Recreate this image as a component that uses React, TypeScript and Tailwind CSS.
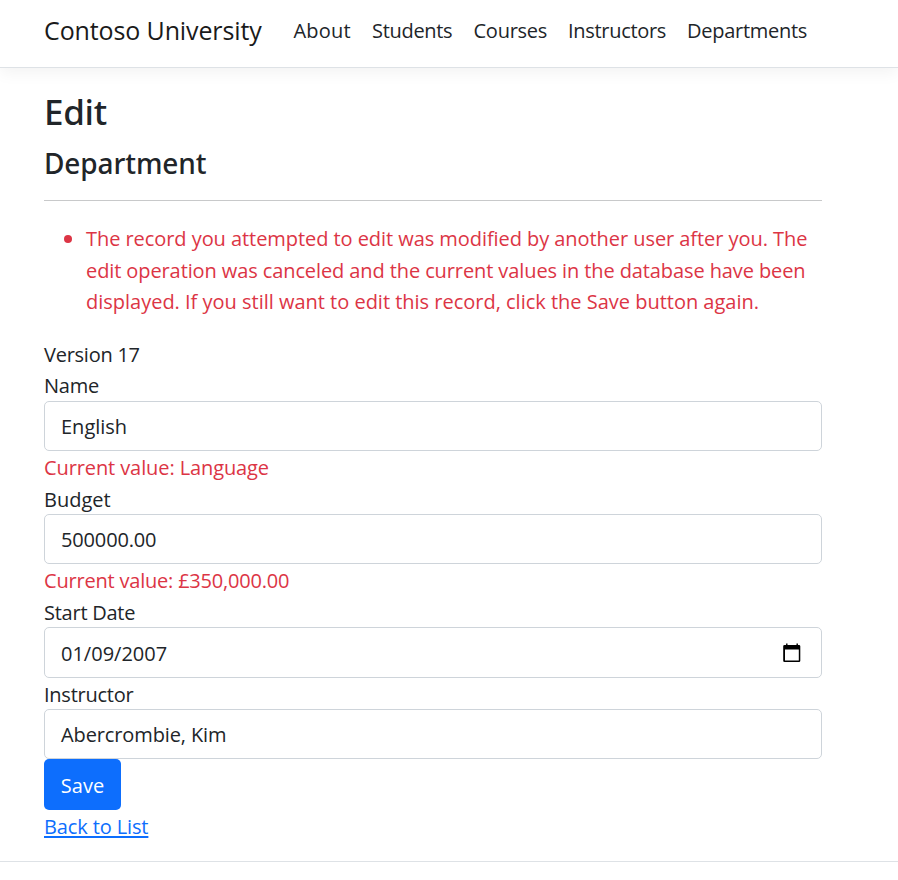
import type { ReactNode } from "react";

const navItems = [
  { label: "About", style: "w-[78.5px] tracking-[0.2px]" },
  { label: "Students", style: "w-[101.5px] tracking-[-0.3px]" },
  { label: "Courses", style: "w-[94.5px] tracking-[-0.25px]" },
  { label: "Instructors", style: "w-[119px] tracking-[-0.3px]" },
  { label: "Departments", style: "tracking-[-0.27px]" },
];

function CalendarIcon() {
  return (
    <svg className="mb-[2px] h-[20px] w-[18px]" viewBox="0 0 18 20" fill="none">
      <path d="M3.8 0.5v3M14.2 0.5v3" stroke="#000" strokeWidth="1.4" />
      <path
        fillRule="evenodd"
        fill="#000"
        d="M1.5 2h14.5a1.3 1.3 0 0 1 1.3 1.3v14.4a1.3 1.3 0 0 1-1.3 1.3H1.5a1.3 1.3 0 0 1-1.3-1.3V3.3A1.3 1.3 0 0 1 1.5 2zM2 6.5v11h13.8v-11z"
      />
    </svg>
  );
}

function Label({ children, className = "" }: { children: ReactNode; className?: string }) {
  return <div className={`whitespace-nowrap ${className}`}>{children}</div>;
}

function Field({ children, className = "" }: { children: ReactNode; className?: string }) {
  return (
    <div
      className={`flex items-center justify-between rounded-[5px] border border-[#ced4da] bg-white pl-4 pr-5 pt-[2px] ${className}`}
    >
      {children}
    </div>
  );
}

export default function App() {
  return (
    <div className="min-h-[880px] bg-white font-['Open_Sans','Noto_Sans',sans-serif] text-[20px] leading-[31.5px] text-[#212529]">
      <header className="h-[68px] border-b border-[#dee2e6] bg-white pl-11 shadow-[0_5px_15px_rgba(0,0,0,0.05)]">
        <nav className="flex pt-[15px]">
          <a className="w-[249.5px] whitespace-nowrap text-[25px] tracking-[-0.12px] text-[#1a1a1a]">Contoso University</a>
          {navItems.map((item) => (
            <a key={item.label} className={`whitespace-nowrap ${item.style}`}>
              {item.label}
            </a>
          ))}
        </nav>
      </header>

      <main className="ml-11 w-[778px]">
        <h1 className="pt-[20px] font-['Noto_Sans'] text-[35px] font-medium leading-[48px] tracking-[-0.3px]">Edit</h1>
        <h2 className="pt-[9px] font-['Noto_Sans'] text-[28px] font-medium leading-[36px] tracking-[-0.1px]">Department</h2>
        <hr className="mt-[19px] border-0 border-t border-[#c8c9ca]" />

        <ul className="mt-[22px] flex text-[#dc3545]">
          <li className="flex">
            <span className="ml-5 mr-[14px] mt-[12px] h-2 w-2 shrink-0 rounded-full bg-[#dc3545]" />
            <div className="whitespace-nowrap">
              <div className="tracking-[-0.06px]">The record you attempted to edit was modified by another user after you. The</div>
              <div className="tracking-[-0.1px]">edit operation was canceled and the current values in the database have been</div>
              <div className="tracking-[-0.01px]">displayed. If you still want to edit this record, click the Save button again.</div>
            </div>
          </li>
        </ul>

        <form className="pt-[21.5px]">
          <Label className="h-[31px] tracking-[-0.25px]">Version 17</Label>
          <Label className="h-[31px] tracking-[-0.2px]">Name</Label>
          <Field className="h-[50px]">English</Field>
          <Label className="h-[32px] pt-px tracking-[-0.1px] text-[#dc3545]">Current value: Language</Label>
          <Label className="h-[31px] pt-px">Budget</Label>
          <Field className="h-[50px] tracking-[-0.15px]">500000.00</Field>
          <Label className="h-[32px] pt-px tracking-[-0.2px] text-[#dc3545]">Current value: £350,000.00</Label>
          <Label className="h-[31px] pt-px tracking-[-0.25px]">Start Date</Label>
          <Field className="h-[51px]">
            <span className="pt-px">01/09/2007</span>
            <CalendarIcon />
          </Field>
          <Label className="h-[31px] pt-px tracking-[-0.25px]">Instructor</Label>
          <Field className="h-[50px] tracking-[-0.12px]">Abercrombie, Kim</Field>
          <button
            type="button"
            className="block h-[51px] w-[77px] rounded-[5px] bg-[#0d6efd] pt-[2px] text-center text-white"
          >
            Save
          </button>
          <Label className="h-[32px] pt-px tracking-[-0.12px] text-[#0d6efd]">
            <a className="underline decoration-2 underline-offset-[2px]">Back to List</a>
          </Label>
        </form>
      </main>

      <footer className="mt-[19px] border-t border-[#dee2e6]" />
    </div>
  );
}
